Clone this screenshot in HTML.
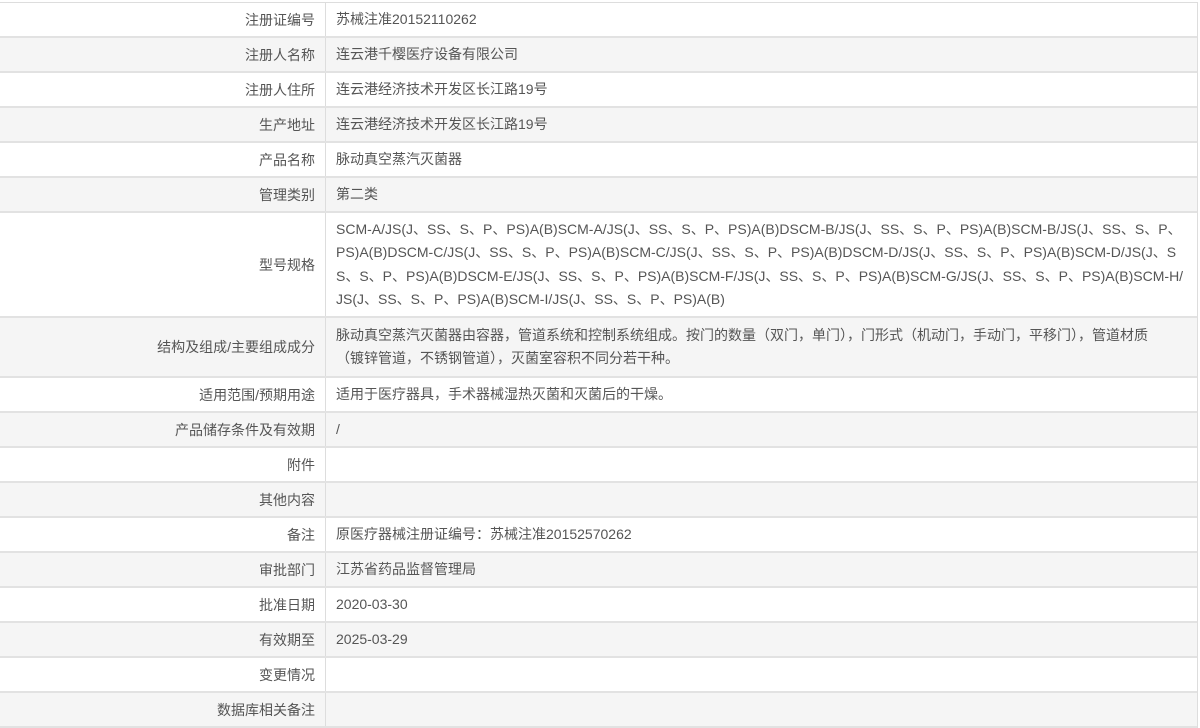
<!DOCTYPE html>
<html><head><meta charset="utf-8"><style>
body{margin:0;background:#fff;font-family:"Liberation Sans","Noto Sans CJK SC",sans-serif;font-size:14px;color:#555;}
.t{position:absolute;left:0;top:2px;width:1197px;border-top:1px solid #ddd;border-right:1px solid #ddd;}
.r{display:flex;border-bottom:2px solid #e2e2e2;box-sizing:border-box;}
.r:nth-child(even){background:#f5f5f5;}
.l{width:326px;flex:none;text-align:right;padding-right:10px;box-sizing:border-box;border-right:1px solid #ddd;display:flex;align-items:center;justify-content:flex-end;}
.v{padding:0 10px;flex:1;display:flex;align-items:center;line-height:23.5px;word-break:break-all;}
</style></head><body><div class="t">
<div class="r" style="height:35px"><div class="l">注册证编号</div><div class="v">苏械注准20152110262</div></div>
<div class="r" style="height:35px"><div class="l">注册人名称</div><div class="v">连云港千樱医疗设备有限公司</div></div>
<div class="r" style="height:35px"><div class="l">注册人住所</div><div class="v">连云港经济技术开发区长江路19号</div></div>
<div class="r" style="height:35px"><div class="l">生产地址</div><div class="v">连云港经济技术开发区长江路19号</div></div>
<div class="r" style="height:35px"><div class="l">产品名称</div><div class="v">脉动真空蒸汽灭菌器</div></div>
<div class="r" style="height:35px"><div class="l">管理类别</div><div class="v">第二类</div></div>
<div class="r" style="height:105px"><div class="l">型号规格</div><div class="v">SCM-A/JS(J、SS、S、P、PS)A(B)SCM-A/JS(J、SS、S、P、PS)A(B)DSCM-B/JS(J、SS、S、P、PS)A(B)SCM-B/JS(J、SS、S、P、PS)A(B)DSCM-C/JS(J、SS、S、P、PS)A(B)SCM-C/JS(J、SS、S、P、PS)A(B)DSCM-D/JS(J、SS、S、P、PS)A(B)SCM-D/JS(J、SS、S、P、PS)A(B)DSCM-E/JS(J、SS、S、P、PS)A(B)SCM-F/JS(J、SS、S、P、PS)A(B)SCM-G/JS(J、SS、S、P、PS)A(B)SCM-H/JS(J、SS、S、P、PS)A(B)SCM-I/JS(J、SS、S、P、PS)A(B)</div></div>
<div class="r" style="height:60px"><div class="l">结构及组成/主要组成成分</div><div class="v"><span>脉动真空蒸汽灭菌器由容器，管道系统和控制系统组成。按门的数量（双门，单门），门形式（机动门，手动门，平移门），管道材质<br>（镀锌管道，不锈钢管道），灭菌室容积不同分若干种。</span></div></div>
<div class="r" style="height:35px"><div class="l">适用范围/预期用途</div><div class="v">适用于医疗器具，手术器械湿热灭菌和灭菌后的干燥。</div></div>
<div class="r" style="height:35px"><div class="l">产品储存条件及有效期</div><div class="v">/</div></div>
<div class="r" style="height:35px"><div class="l">附件</div><div class="v"></div></div>
<div class="r" style="height:35px"><div class="l">其他内容</div><div class="v"></div></div>
<div class="r" style="height:35px"><div class="l">备注</div><div class="v">原医疗器械注册证编号：苏械注准20152570262</div></div>
<div class="r" style="height:35px"><div class="l">审批部门</div><div class="v">江苏省药品监督管理局</div></div>
<div class="r" style="height:35px"><div class="l">批准日期</div><div class="v">2020-03-30</div></div>
<div class="r" style="height:35px"><div class="l">有效期至</div><div class="v">2025-03-29</div></div>
<div class="r" style="height:35px"><div class="l">变更情况</div><div class="v"></div></div>
<div class="r" style="height:35px"><div class="l">数据库相关备注</div><div class="v"></div></div>
</div></body></html>
